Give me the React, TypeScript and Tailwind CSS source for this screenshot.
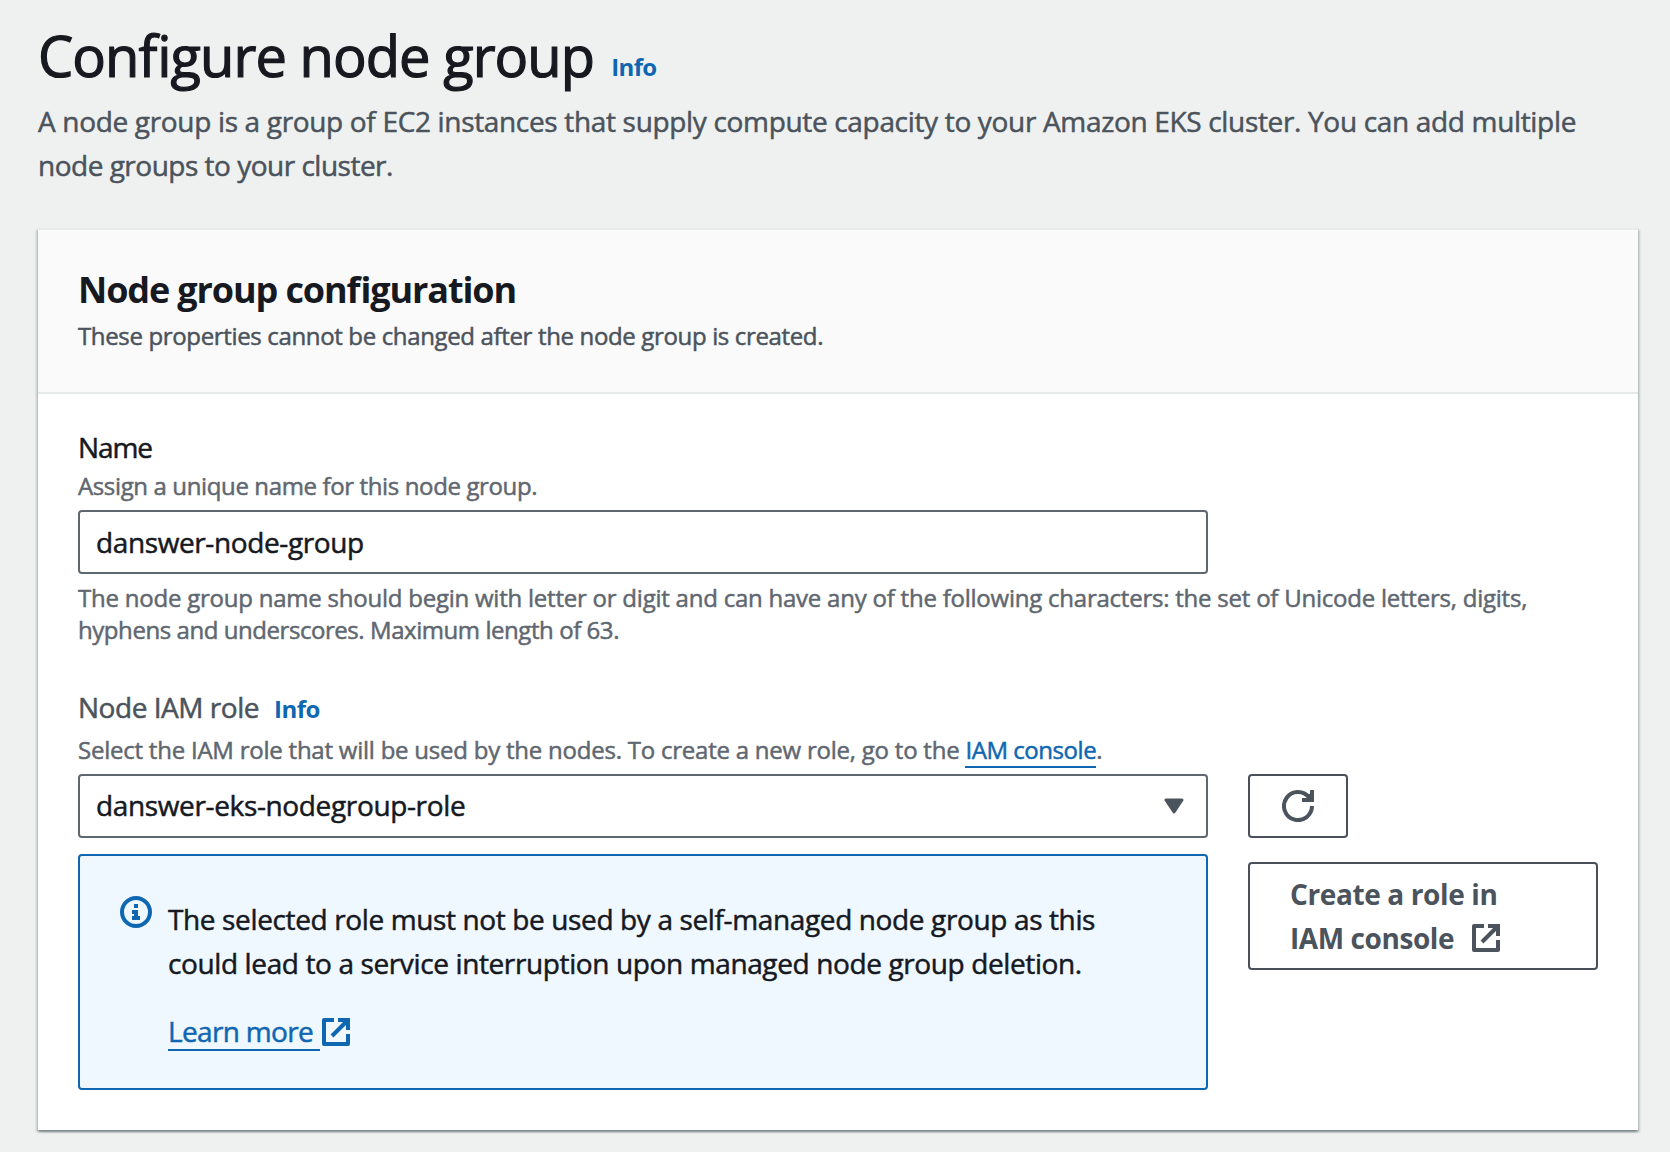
function ExternalIcon({ className }: { className: string }) {
  return (
    <svg viewBox="0 0 28 28" className={className} fill="none" stroke="currentColor" strokeWidth="4">
      <path d="M12 2H2v24h24V16" strokeLinejoin="round" />
      <path d="M16 2h10v10" />
      <path d="M10 18L25 3" />
    </svg>
  );
}

function RefreshIcon() {
  return (
    <svg viewBox="0 0 32 32" className="size-8" fill="none" stroke="currentColor" strokeWidth="4">
      <path d="M30 16A14 14 0 1 1 27.1 7.5" />
      <path d="M30 0v10H20" />
      <path d="M23.5 4.5L28 9V4.500z" strokeWidth="1" fill="currentColor" />
    </svg>
  );
}

function InfoIcon() {
  return (
    <svg viewBox="0 0 32 32" className="size-8 shrink-0 text-[#0f67b1]">
      <circle cx="16" cy="16" r="14" fill="none" stroke="currentColor" strokeWidth="4" />
      <path fill="currentColor" d="M14 8h4v4h-4zM12 14h6v6h2v4h-8v-4h2v-2h-2z" />
    </svg>
  );
}

export default function App() {
  return (
    <div className="h-[1152px] w-[1670px] overflow-hidden bg-[#eff1f0] px-[38px] pt-[19px] font-['Open_Sans',sans-serif] text-[28px] leading-[44px] text-[#16191f] [-webkit-text-stroke:0.5px] [font-feature-settings:'liga']">
      <header className="w-[1600px]">
        <div className="flex items-baseline">
          <h1 className="text-[56px] leading-[72px] tracking-[-0.93px] [-webkit-text-stroke:1.2px]">Configure node group</h1>
          <a className="relative -top-px ml-[17px] text-[24px] font-bold tracking-[-0.6px] text-[#0f67b1] [-webkit-text-stroke:0]">Info</a>
        </div>
        <p className="mt-2 whitespace-nowrap text-[#4b535c]">
          <span className="tracking-[-0.33px]">
            A node group is a group of EC2 instances that supply compute capacity to your Amazon EKS cluster. You can add multiple
          </span>
          <br />
          <span className="tracking-[-0.5px]">node groups to your cluster.</span>
        </p>
      </header>

      <section className="mt-[41px] flex h-[902px] w-[1600px] flex-col bg-white shadow-[0_2px_2px_0_rgba(0,28,36,0.3),2px_2px_2px_0_rgba(0,28,36,0.15),-2px_2px_2px_0_rgba(0,28,36,0.15)]">
        <div className="h-[166px] shrink-0 border-y-2 border-[#e6eaea] bg-[#fafafa] px-10 pt-[38px]">
          <h2 className="text-[36px] font-bold leading-[44px] tracking-[-1.12px] [-webkit-text-stroke:0]">Node group configuration</h2>
          <p className="mt-2 text-[24px] leading-8 tracking-[-0.35px] text-[#4b535c]">
            These properties cannot be changed after the node group is created.
          </p>
        </div>

        <div className="px-10 pt-[33px]">
          <label className="block leading-10 tracking-[-1.1px]">Name</label>
          <p className="mt-[3px] text-[24px] leading-8 tracking-[-0.37px] text-[#5f6770]">Assign a unique name for this node group.</p>
          <div className="mt-2 flex h-16 w-[1130px] items-center rounded-[4px] border-2 border-[#5f6770] px-4 tracking-[-0.39px]">
            danswer-node-group
          </div>
          <p className="mt-2 whitespace-nowrap text-[24px] leading-8 text-[#5f6770]">
            <span className="tracking-[-0.23px]">
              The node group name should begin with letter or digit and can have any of the following characters: the set of Unicode letters, digits,
            </span>
            <br />
            <span className="tracking-[-0.44px]">hyphens and underscores. Maximum length of 63.</span>
          </p>

          <div className="mt-[41px] flex h-10 items-baseline leading-10">
            <span className="tracking-[-0.47px] text-[#4b535c]">Node IAM role</span>
            <a className="ml-[15px] text-[24px] font-bold tracking-[-0.5px] text-[#0f67b1] [-webkit-text-stroke:0]">Info</a>
          </div>
          <p className="mt-[7px] flex h-8 text-[24px] leading-8 tracking-[-0.23px] text-[#5f6770]">
            <span className="whitespace-pre">Select the IAM role that will be used by the nodes. To create a new role, go to the </span>
            <a className="h-[34px] border-b-2 border-[#0f67b1] tracking-[-0.45px] text-[#0f67b1]">IAM console</a>.
          </p>

          <div className="mt-2 flex gap-10">
            <div className="w-[1130px]">
              <div className="flex h-16 items-center justify-between rounded-[4px] border-2 border-[#5f6770] pl-4 pr-[22px]">
                <span className="-mt-[2px] tracking-[-0.36px]">danswer-eks-nodegroup-role</span>
                <svg viewBox="0 0 20 16" className="h-4 w-5 text-[#4b535c]">
                  <path d="M2 2h16l-8 12z" fill="currentColor" stroke="currentColor" strokeWidth="3" strokeLinejoin="round" />
                </svg>
              </div>
              <div className="mt-4 flex h-[236px] gap-4 rounded-[4px] border-2 border-[#0f67b1] bg-[#f0f8ff] pl-10 pt-10">
                <InfoIcon />
                <div className="mt-[1px] whitespace-nowrap">
                  <p>
                    <span className="tracking-[-0.37px]">The selected role must not be used by a self-managed node group as this</span>
                    <br />
                    <span className="tracking-[-0.38px]">could lead to a service interruption upon managed node group deletion.</span>
                  </p>
                  <a className="mt-6 flex items-start text-[#0f67b1]">
                    <span className="h-[42px] w-[152px] border-b-2 border-[#0f67b1] tracking-[-0.67px]">Learn more</span>
                    <ExternalIcon className="ml-[2px] mt-[9px] size-7" />
                  </a>
                </div>
              </div>
            </div>

            <div className="flex flex-col gap-6 text-[#4b535c]">
              <button className="flex h-16 w-[100px] items-center justify-center rounded-[4px] border-2 border-[#4b4f5b]">
                <RefreshIcon />
              </button>
              <button className="h-[108px] w-[350px] rounded-[4px] border-2 border-[#4b4f5b] pb-[8px] pl-10 pt-2 text-left font-bold [-webkit-text-stroke:0]">
                <span className="block tracking-[-0.38px]">Create a role in</span>
                <span className="flex items-start">
                  <span className="w-[182px] tracking-[-0.42px]">IAM console</span>
                  <ExternalIcon className="mt-[8px] size-7" />
                </span>
              </button>
            </div>
          </div>
        </div>
      </section>
    </div>
  );
}
